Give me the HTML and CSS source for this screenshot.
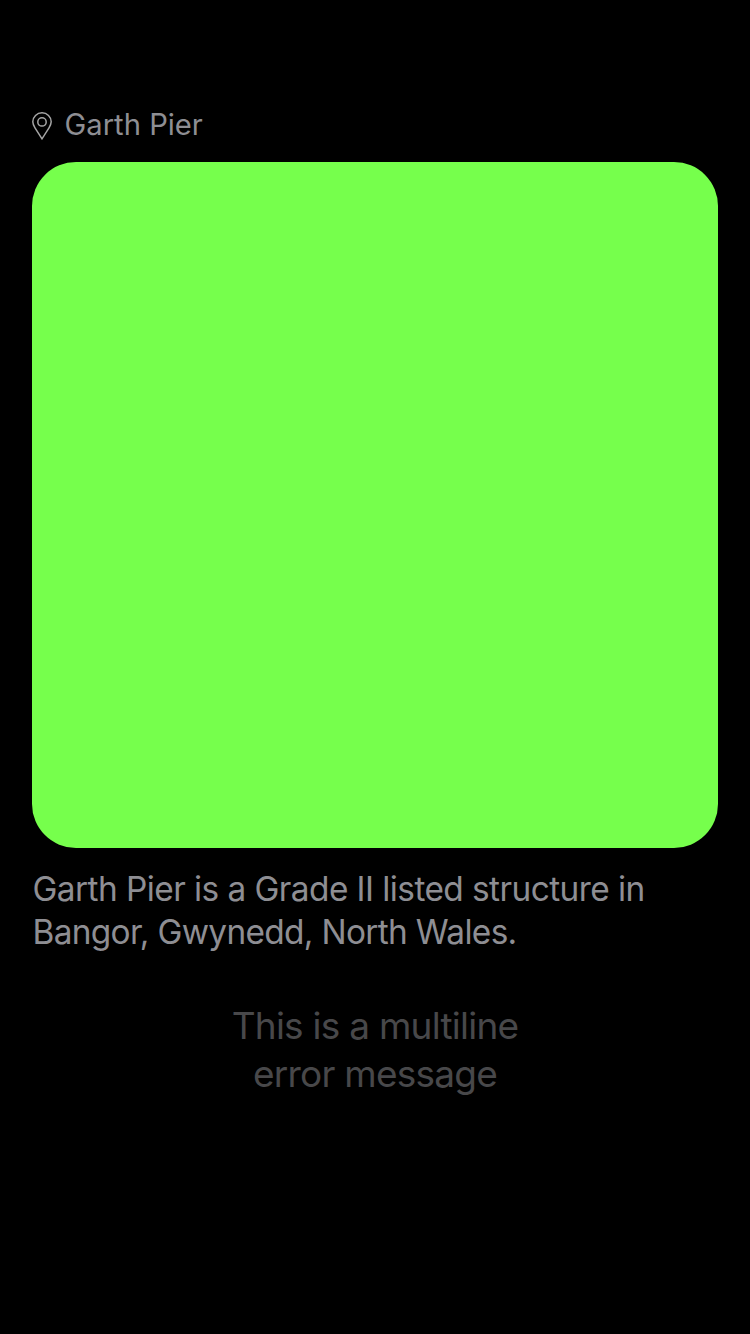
FILE: index.html
```html
<!DOCTYPE html>
<html lang="en">
<head>
<meta charset="utf-8">
<title>Garth Pier</title>
<link rel="stylesheet" href="styles.css">
</head>
<body>
<main class="post">
  <header class="location">
    <svg class="pin" width="20" height="28" viewBox="0 0 20 28" fill="none" stroke="currentColor" stroke-width="1.5">
      <path d="M10 26.8L3 15.8C1.6 13.6 .8 11.8 .8 9.8a9.2 9 0 0 1 18.4 0C19.2 11.8 18.4 13.6 17 15.8Z"/>
      <circle cx="10" cy="9.9" r="4.2"/>
    </svg>
    <span class="place">Garth Pier</span>
  </header>
  <div class="photo"></div>
  <p class="description"><span class="line first">Garth Pier is a Grade II listed structure in</span><span class="line second">Bangor, Gwynedd, North Wales.</span></p>
  <p class="error"><span class="line top">This is a multiline</span><span class="line bottom">error message</span></p>
</main>
</body>
</html>
```
FILE: styles.css
```css
body {
  margin: 0;
  background: #000;
  font-family: Inter, sans-serif;
  color: #8e8e93;
}
.post {
  box-sizing: border-box;
  min-height: 1334px;
  padding: 106px 32px 0;
}
.location {
  display: flex;
  align-items: center;
  height: 38px;
}
.pin { margin-top: 2px; color: #a6a6a6; }
.place {
  margin-left: 12.5px;
  font-size: 29.2px;
  line-height: 38px;
}
.photo {
  height: 686px;
  margin-top: 18px;
  border-radius: 44px;
  background: #76ff4c;
}
.description {
  margin: 20px 0 0 0.5px;
  font-size: 33.4px;
  line-height: 43px;
}
.line {
  display: block;
  white-space: nowrap;
}
.first { letter-spacing: -0.56px; }
.second { letter-spacing: -0.67px; }
.error {
  margin: 48px 0 0;
  text-align: center;
  font-size: 37px;
  line-height: 48px;
  color: #48484a;
}
.top { letter-spacing: -0.75px; }
.bottom { letter-spacing: -0.78px; }
```
